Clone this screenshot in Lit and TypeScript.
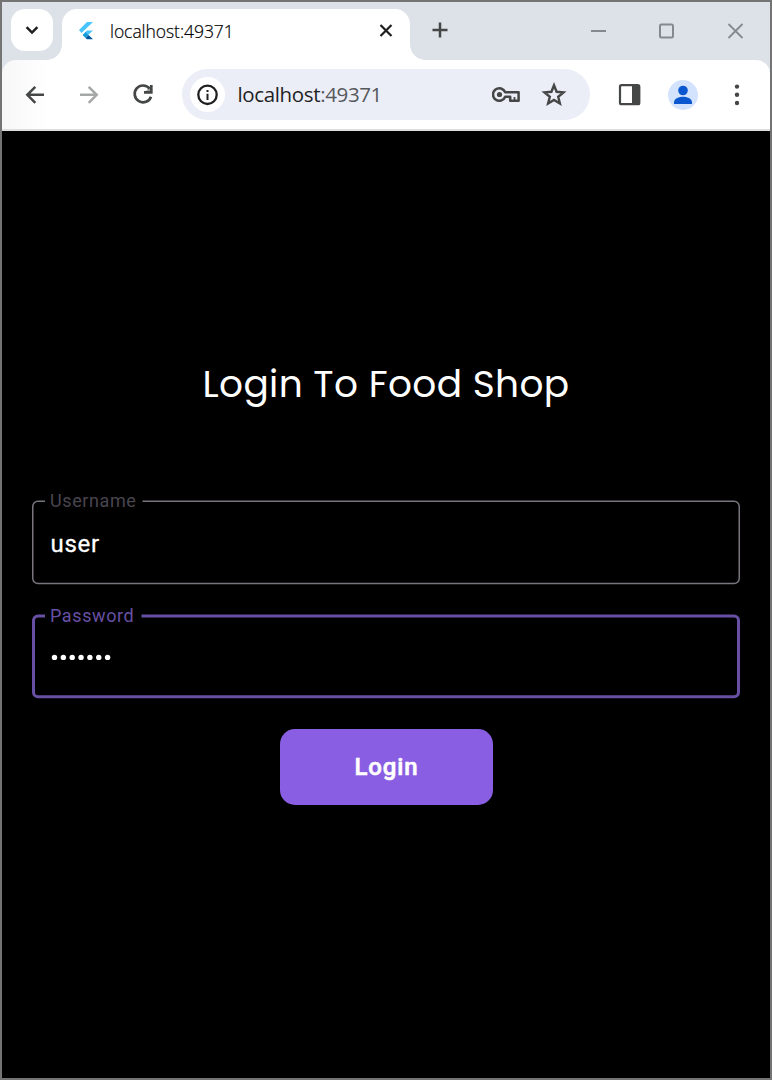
import { LitElement, html, css, svg } from "lit";
import { customElement, property } from "lit/decorators.js";

@customElement("browser-chrome")
class BrowserChrome extends LitElement {
  static styles = css`
    :host { display: block; font-family: "Open Sans", "Noto Sans", sans-serif; }
    svg { display: block; flex: none; }
    .strip { display: flex; height: 58px; box-sizing: border-box; padding: 7px 0 0 9px; background: #dde2e9; }
    .search { width: 42px; height: 42px; border-radius: 14px; background: #fff; }
    .tab { position: relative; display: flex; align-items: center; width: 348px; height: 51px; margin-left: 9px;
      box-sizing: border-box; padding: 0 14px 7px 14px; border-radius: 15px 15px 0 0; background: #fff; }
    .tab::before, .tab::after { content: ""; position: absolute; bottom: 0; width: 15px; height: 15px; }
    .tab::before { left: -15px; background: radial-gradient(circle at 0 0, transparent 14.5px, #fff 15px); }
    .tab::after { right: -15px; background: radial-gradient(circle at 100% 0, transparent 14.5px, #fff 15px); }
    .title { flex: 1; margin-left: 14px; font-size: 17.5px; font-weight: 300; line-height: 24px; color: #000; letter-spacing: -0.05px; -webkit-text-stroke: 0.2px #000; }
    .plus { margin: 6px 0 0 15px; }
    .win { display: flex; flex: 1; justify-content: flex-end; gap: 38.5px; padding: 7px 19.5px 0 0; }
    .back { background: #dde2e9; }
    .bar { display: flex; align-items: center; height: 69px; box-sizing: border-box; padding-left: 18px;
      background: linear-gradient(90deg, #f7f7f7, #fff 46px); border-radius: 14px 14px 0 0; }
    .gap { margin-left: 24px; }
    .omni { display: flex; align-items: center; width: 408px; height: 51px; margin-left: 24px; box-sizing: border-box;
      padding: 0 21px 0 8px; border-radius: 26px; background: #ebeef7; }
    .info { display: grid; place-items: center; width: 35px; height: 35px; border-radius: 50%; background: #fff; }
    .url { flex: 1; margin-left: 12.5px; padding-bottom: 1px; font-size: 20.5px; line-height: 28px; color: #1f1f1f; letter-spacing: -0.36px; }
    .port { color: #56585c; }
    .star { margin-left: 19px; }
    .panel { margin-left: 24px; }
    .avatar { margin-left: 23px; }
    .more { margin-left: 24px; }
    .rule { height: 2px; background: #dedede; }
  `;

  render() {
    return html`
      <div class="strip">
        <div class="search"><svg width="42" height="42" fill="none" stroke="#1f1f1f" stroke-width="2.5"><path d="M15.6 18.2 21 23.6l5.4-5.4"/></svg></div>
        <div class="tab">
          <svg width="20" height="20" viewBox="0 0 20 20">
            <path fill="#47c5fb" d="M11 1h6L5.500 12 3 9z"/>
            <path fill="#47c5fb" d="M11 9.500h6L12 14 9 11.500z"/>
            <path fill="#189bdc" d="m6.500 14 3-3 3 3-3 3z"/>
            <path fill="#00569e" d="m9.500 17 3-3 4.500 4.300h-6z"/>
          </svg>
          <span class="title">localhost:49371</span>
          <svg width="20" height="20" fill="none" stroke="#1f1f1f" stroke-width="2.200"><path d="m4.500 4 11 11m0-11-11 11"/></svg>
        </div>
        <svg class="plus" width="30" height="30" fill="none" stroke="#444746" stroke-width="2.500"><path d="M15 7.500v15M7.500 15h15"/></svg>
        <div class="win">
          <svg width="30" height="30" fill="none" stroke="#85888c" stroke-width="2"><path d="M7 15h15"/></svg>
          <svg width="30" height="30" fill="none" stroke="#85888c" stroke-width="2"><rect x="8" y="8.500" width="13" height="13" rx="1.500"/></svg>
          <svg width="30" height="30" fill="none" stroke="#85888c" stroke-width="1.800"><path d="m7.500 8 14 14m0-14-14 14"/></svg>
        </div>
      </div>
      <div class="back">
        <div class="bar">
          <svg width="30" height="30" fill="none" stroke="#444746" stroke-width="2.500"><path d="M24 14.800H7.500m7.800-8-8 8 8 8"/></svg>
          <svg class="gap" width="30" height="30" fill="none" stroke="#a6a7a7" stroke-width="2.500"><path d="M6 14.800h16.500m-7.800-8 8 8-8 8"/></svg>
          <svg class="gap" width="30" height="30" fill="none" stroke="#444746" stroke-width="2.700"><path d="M21.600 8.600A8.400 8.400 0 1 0 23 16.700M23.300 5v7.300h-7.300"/><path fill="#444746" stroke="none" d="M24 5v8h-8z" opacity="0.5"/></svg>
          <div class="omni">
            <div class="info"><svg width="22" height="22"><circle cx="10.500" cy="10.800" r="9.200" fill="none" stroke="#1f1f1f" stroke-width="2.300"/><path fill="#1f1f1f" d="M9.500 9.800h2V16h-2zM9.500 6h2v2h-2z"/></svg></div>
            <span class="url">localhost<span class="port">:49371</span></span>
            <svg width="28" height="20" fill="none" stroke="#444746" stroke-width="2.500"><path d="M13.200 7.300A6.300 6.300 0 1 0 13.200 11.700H18.200V15.800H26.600V7.300z" stroke-linejoin="round"/><circle cx="7.500" cy="9.500" r="2.600" fill="#444746" stroke="none"/><path stroke-width="1.800" d="M22.500 12v3.500"/></svg>
            <svg class="star" width="30" height="30" fill="none" stroke="#444746" stroke-width="2.400"><path d="m15 5.300 2.600 6.500 6.900.6-5.300 4.400 1.700 6.700L15 19.900l-5.900 3.600 1.700-6.700-5.300-4.400 6.900-.6z"/></svg>
          </div>
          <svg class="panel" width="30" height="30"><rect x="6" y="5.200" width="19.300" height="19" rx="1.500" fill="none" stroke="#444746" stroke-width="2.200"/><path fill="#444746" d="M18 5h8v19.500h-8z"/></svg>
          <svg class="avatar" width="32" height="32"><circle cx="16" cy="16" r="15" fill="#d3e3fd"/><circle cx="16" cy="11.500" r="4.800" fill="#0b57d0"/><path fill="#0b57d0" d="M7 25v-1.800c0-3.600 5.500-5.400 9-5.400s9 1.800 9 5.400V25z"/></svg>
          <svg class="more" width="30" height="30" fill="#444746"><circle cx="14" cy="6.600" r="2.200"/><circle cx="14" cy="14.800" r="2.200"/><circle cx="14" cy="23" r="2.200"/></svg>
        </div>
      </div>
      <div class="rule"></div>
    `;
  }
}

@customElement("outlined-field")
class OutlinedField extends LitElement {
  @property() label = "";
  @property() value = "";
  @property({ type: Boolean, reflect: true }) focused = false;

  static styles = css`
    :host { display: block; position: relative; height: 84px; font-family: Roboto, sans-serif; color: #fff; }
    .outline { position: absolute; inset: 0; }
    .label { position: absolute; left: 18px; top: -10px; font-size: 18px; line-height: 22px; letter-spacing: 0.6px; color: #49454f; }
    .value { padding: 29px 18px 0 18.5px; font-size: 24px; line-height: 30px; letter-spacing: 0.7px; -webkit-text-stroke: 0.3px #fff; }
    :host([focused]) .label { top: -9px; color: #6750a4; }
  `;

  render() {
    const w = this.focused ? 3 : 1.5;
    const a = w / 2;
    const t = a + 0.4;
    const r = 708 - a;
    const b = 84.2 - a;
    const k = 6 - a;
    const end = this.focused ? 109.5 : 110.5;
    const d = `M${end} ${t}H${r - k}a${k} ${k} 0 0 1 ${k} ${k}V${b - k}a${k} ${k} 0 0 1 ${-k} ${k}H${a + k}a${k} ${k} 0 0 1 ${-k} ${-k}V${t + k}a${k} ${k} 0 0 1 ${k} ${-k}H13`;
    return html`
      <svg class="outline" width="708" height="85">${svg`<path d=${d} fill="none" stroke=${this.focused ? "#6750a4" : "#79747e"} stroke-width=${w} />`}</svg>
      <span class="label">${this.label}</span>
      ${this.focused
        ? html`<svg width="90" height="84" fill="#fff">${[0, 1, 2, 3, 4, 5, 6].map((i) => svg`<circle cx=${22.5 + i * 8.85} cy="43.4" r="2.7" />`)}</svg>`
        : html`<div class="value">${this.value}</div>`}
    `;
  }
}

@customElement("app-root")
class AppRoot extends LitElement {
  static styles = css`
    :host { display: block; }
    .window { display: flex; flex-direction: column; width: 772px; height: 1080px; box-sizing: border-box; border: 2px solid #747474; background: #000; overflow: hidden; }
    .page { display: flex; flex-direction: column; align-items: center; flex: 1; padding: 225px 30px 0; color: #fff; font-family: Roboto, sans-serif; }
    .heading { margin: 0; font-family: Poppins, Inter, sans-serif; font-size: 37.5px; line-height: 56px; font-weight: 400; letter-spacing: 0.35px; white-space: nowrap; }
    .user { width: 708px; margin-top: 88px; }
    .pass { width: 708px; margin-top: 30px; }
    .login { width: 213px; height: 76.5px; margin-top: 30.5px; padding: 1px 0 0 1px; border: 0; border-radius: 15px; background: #8a5ee3; color: #fff; font-family: Roboto, sans-serif; font-size: 24px; font-weight: 500; letter-spacing: 0.85px; -webkit-text-stroke: 0.6px #fff; }
  `;

  render() {
    return html`
      <div class="window">
        <browser-chrome></browser-chrome>
        <main class="page">
          <h1 class="heading">Login To Food Shop</h1>
          <outlined-field class="user" label="Username" value="user"></outlined-field>
          <outlined-field class="pass" label="Password" focused></outlined-field>
          <button class="login">Login</button>
        </main>
      </div>
    `;
  }
}
